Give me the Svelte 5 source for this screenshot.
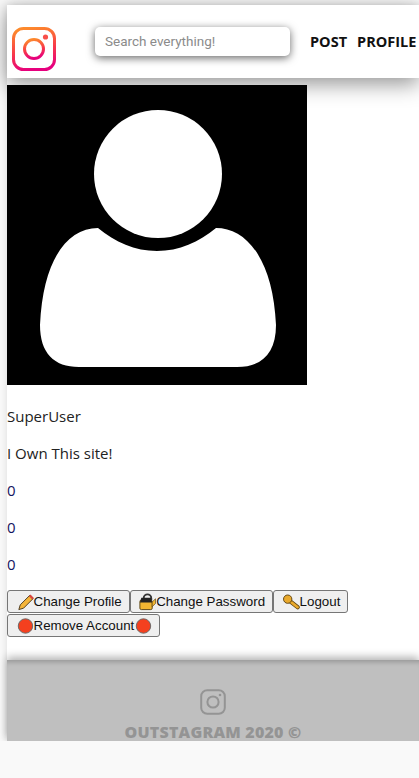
<script>
  const counts = [0, 0, 0];
</script>

<div class="page">
  <header class="top">
    <svg class="logo" viewBox="0 0 44 44" width="44" height="44" aria-hidden="true">
      <defs>
        <linearGradient id="ig" x1="0.3" y1="0" x2="0.5" y2="1">
          <stop offset="0" stop-color="#fd8a2c" />
          <stop offset="0.55" stop-color="#f8384a" />
          <stop offset="1" stop-color="#e6007e" />
        </linearGradient>
      </defs>
      <rect x="1.5" y="1.5" width="41" height="41" rx="10" fill="none" stroke="url(#ig)" stroke-width="3" />
      <circle cx="22" cy="22" r="9.5" fill="none" stroke="url(#ig)" stroke-width="3" />
      <circle cx="33.5" cy="10" r="2.6" fill="#f8504a" />
    </svg>
    <input class="search" type="text" placeholder="Search everything!" />
    <nav class="links">
      <span>POST</span>
      <span>PROFILE</span>
    </nav>
  </header>

  <div class="avatar">
    <svg viewBox="0 0 300 300" width="300" height="300" aria-hidden="true">
      <circle cx="151" cy="89" r="64" fill="#fff" />
      <path d="M91 143 C108 157 128 166 150 166 C172 166 192 157 209 143 C240 143 266 175 269 240 C269 268 255 282 230 282 L72 282 C47 282 33 268 33 240 C36 175 60 143 91 143 Z" fill="#fff" />
    </svg>
  </div>

  <div class="info">
    <p>SuperUser</p>
    <p>I Own This site!</p>
    {#each counts as count}
      <p class="count">{count}</p>
    {/each}
  </div>

  <div class="actions">
    <button>
      <svg viewBox="0 0 19 18" width="18" height="18" aria-hidden="true">
        <path d="M3 17 L4.5 12 L14.5 2 L18 5.5 L8 15.5 Z" fill="#f5b53a" stroke="#4a3a20" stroke-width="1" />
        <path d="M14.5 2 L18 5.5" stroke="#d8453c" stroke-width="2.4" />
      </svg>Change Profile
    </button>
    <button>
      <svg viewBox="0 0 19 18" width="18" height="18" aria-hidden="true">
        <path d="M6 7 V5 C6 2.5 8 1 10 1 C12 1 14 2.5 14 5 V7" fill="none" stroke="#333" stroke-width="2" />
        <rect x="2" y="7" width="13" height="10" rx="1.5" fill="#f2b632" stroke="#5a4414" />
        <path d="M2 9.5 L3.5 4.5 H13.5 L15 9.5 Z" fill="#222" />
        <path d="M15 9 L18.5 5.5 V10.5 L15 14 Z" fill="#f2b632" stroke="#5a4414" stroke-width="0.7" />
      </svg>Change Password
    </button>
    <button>
      <svg viewBox="0 0 19 18" width="18" height="18" aria-hidden="true">
        <path d="M7 7 L16.5 14.5" stroke="#5c4210" stroke-width="4.4" stroke-linecap="round" />
        <path d="M7 7 L16.5 14.5" stroke="#e9a92c" stroke-width="2.8" stroke-linecap="round" />
        <circle cx="6" cy="6" r="4.4" fill="#e9a92c" stroke="#5c4210" />
      </svg>Logout
    </button>
    <button>
      <svg viewBox="0 0 19 18" width="18" height="18" aria-hidden="true">
        <circle cx="10" cy="9" r="7.6" fill="#f4401f" stroke="#666" />
      </svg>Remove Account<svg viewBox="0 0 19 18" width="18" height="18" aria-hidden="true">
        <circle cx="10" cy="9" r="7.6" fill="#f4401f" stroke="#666" />
      </svg>
    </button>
  </div>

  <footer class="bottom">
    <svg class="mark" viewBox="0 0 26 26" width="26" height="26" aria-hidden="true">
      <rect x="1.2" y="1.2" width="23.6" height="23.6" rx="6" fill="none" stroke="#949494" stroke-width="2" />
      <circle cx="13" cy="13" r="5.6" fill="none" stroke="#949494" stroke-width="2" />
      <circle cx="20" cy="6" r="1.3" fill="#949494" />
    </svg>
    <span class="copy">OUTSTAGRAM 2020 ©</span>
  </footer>
</div>

<style>
  :global(body) {
    background: #f9f9f9;
    overflow: hidden;
  }

  .page {
    margin: 5px 0 0 7px;
    height: 736px;
    background: #fff;
    box-shadow: 0 0 8px rgba(0, 0, 0, 0.12);
    display: flex;
    flex-direction: column;
  }

  .top {
    flex: none;
    height: 73px;
    display: flex;
    align-items: center;
    background: #fff;
    box-shadow: 0 6px 20px rgba(0, 0, 0, 0.42);
    position: relative;
    white-space: nowrap;
  }

  .logo {
    flex: none;
    margin-left: 5px;
    margin-top: 15px;
  }

  .search {
    flex: none;
    box-sizing: border-box;
    width: 195px;
    height: 29px;
    margin: -1px 0 0 39px;
    padding: 0 10px;
    border: none;
    border-radius: 5px;
    background: #fff;
    font-family: Roboto, "Liberation Sans", sans-serif;
    font-size: 13.5px;
    box-shadow: 0 2px 9px rgba(0, 0, 0, 0.6);
  }

  .search::placeholder {
    color: #8b8b8b;
  }

  .links {
    display: flex;
    gap: 10px;
    margin-left: 20px;
    font-family: "Open Sans", sans-serif;
    font-size: 14.5px;
    font-weight: 700;
    color: #111;
  }

  .avatar {
    flex: none;
    width: 300px;
    height: 300px;
    margin-top: 7px;
    background: #000;
    line-height: 0;
  }

  .info {
    margin-top: 21px;
    font-family: "Open Sans", sans-serif;
    font-size: 15px;
    color: #222;
  }

  .info p {
    margin: 0 0 16px;
    line-height: 21px;
  }

  .info .count {
    color: #14145f;
  }

  .actions {
    margin-top: -1px;
    width: 345px;
    display: flex;
    flex-wrap: wrap;
    gap: 1px 0;
  }

  button {
    box-sizing: border-box;
    display: flex;
    align-items: center;
    height: 23px;
    padding: 0 7px 0 7.5px;
    border: 1px solid #767676;
    border-radius: 3px;
    background: #efefef;
    color: #111;
    font-family: "Liberation Sans", sans-serif;
    font-size: 13.33px;
    white-space: pre;
  }

  button svg {
    flex: none;
  }

  .bottom {
    flex: 1;
    margin-top: 23px;
    min-height: 0;
    background: #bfbfbf;
    box-shadow: 0 -3px 8px rgba(0, 0, 0, 0.3), inset 0 6px 5px -4px rgba(0, 0, 0, 0.22);
    display: flex;
    flex-direction: column;
    align-items: center;
    overflow: hidden;
    padding-top: 29px;
    box-sizing: border-box;
  }

  .mark {
    flex: none;
  }

  .copy {
    flex: none;
    margin-top: 5px;
    font-family: "Open Sans", sans-serif;
    font-size: 16px;
    font-weight: 800;
    letter-spacing: 0.2px;
    color: #949494;
    line-height: 24px;
    white-space: nowrap;
  }
</style>
